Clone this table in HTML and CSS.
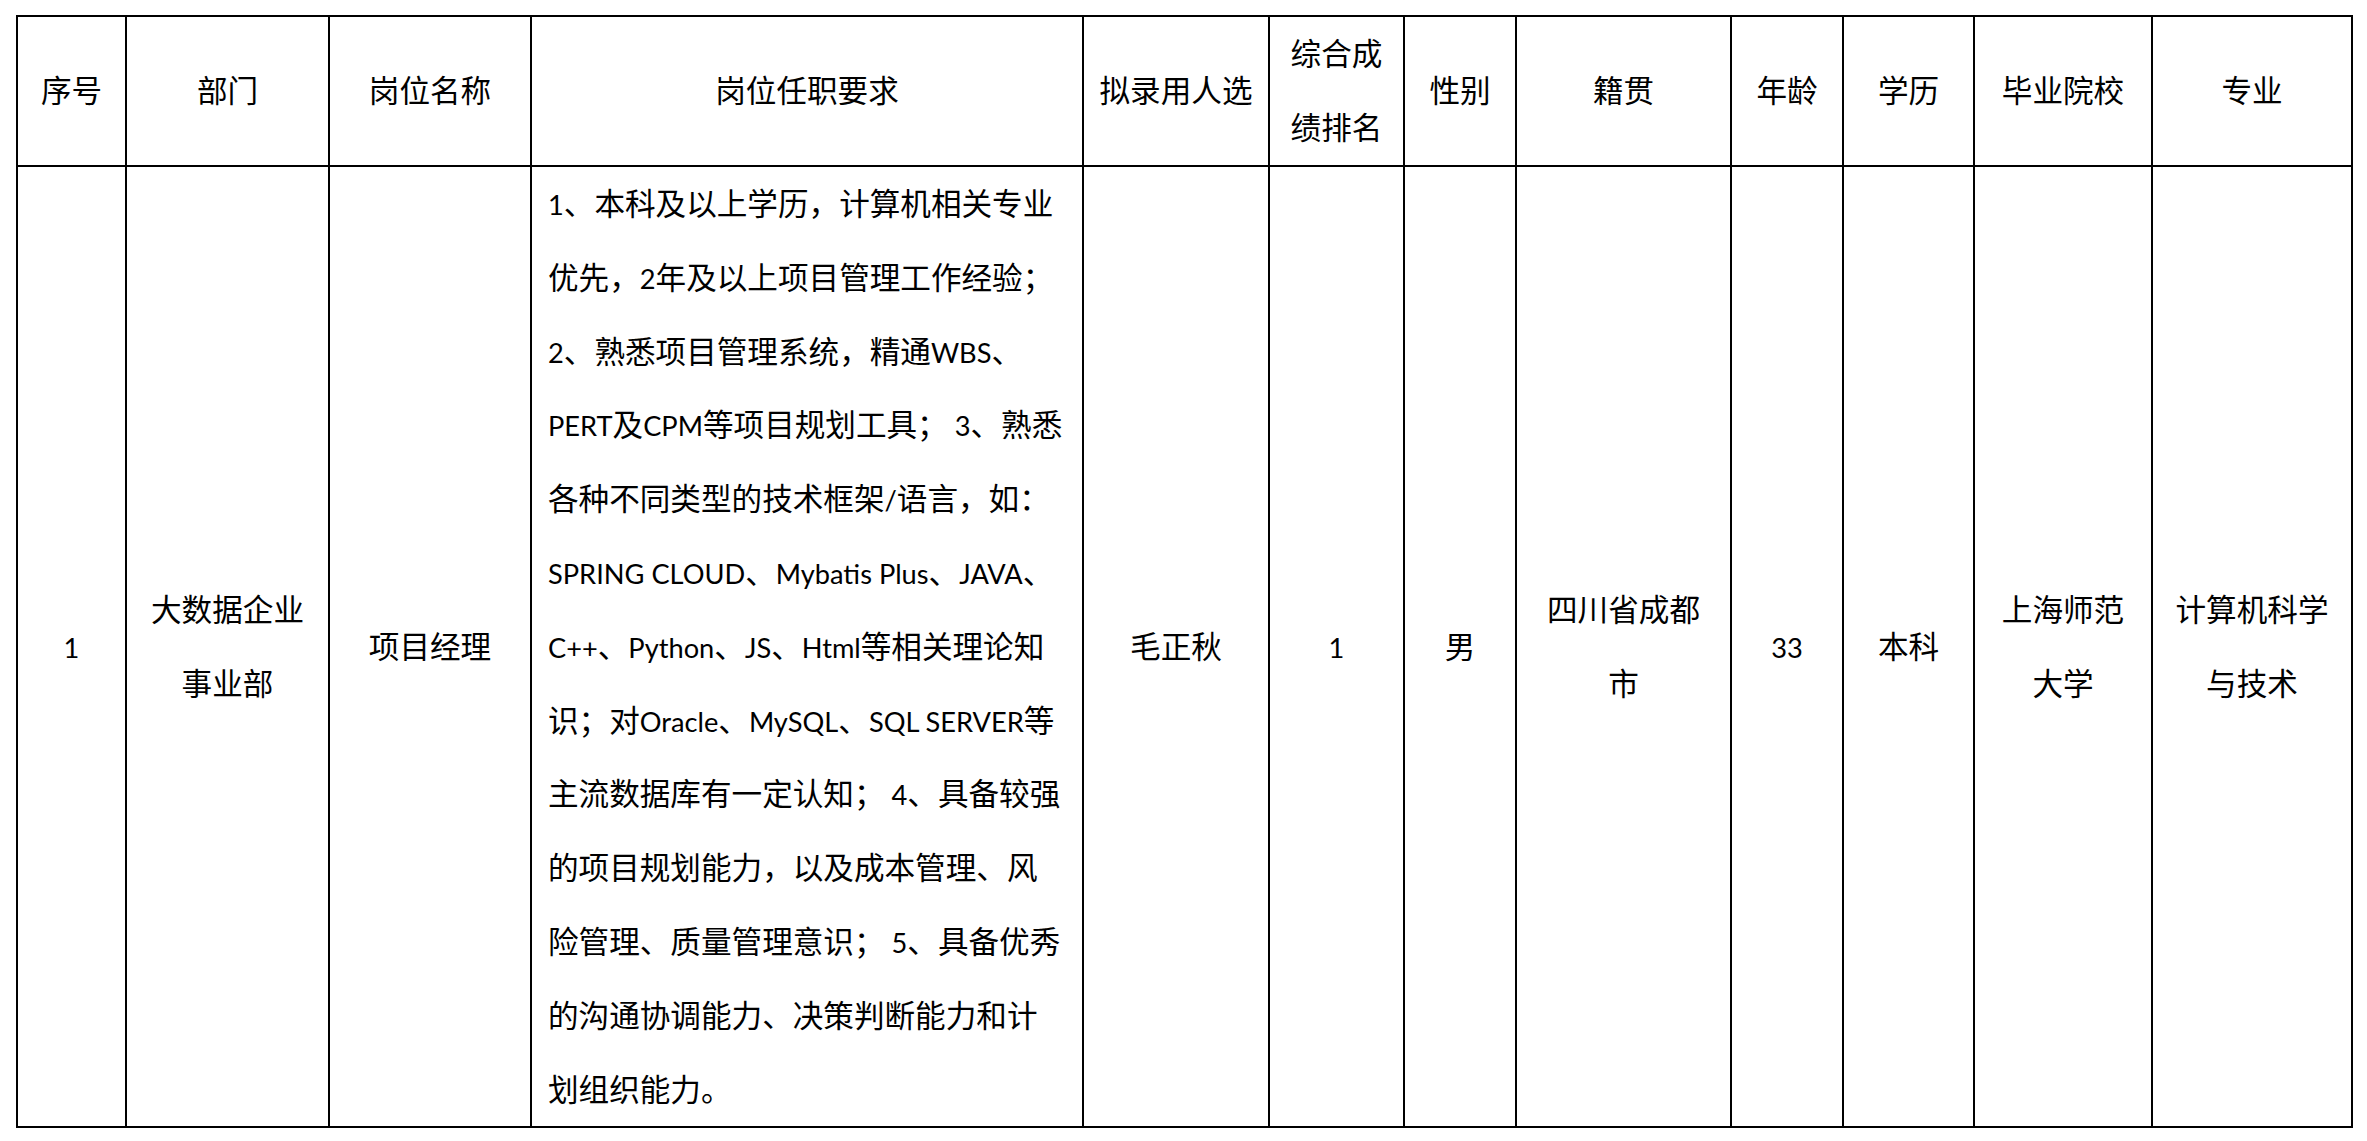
FILE: index.html
```html
<!DOCTYPE html>
<html lang="zh-CN">
<head>
<meta charset="utf-8">
<title>拟录用人员名单</title>
<link rel="stylesheet" href="styles.css">
</head>
<body>
<table class="roster">
  <colgroup>
    <col class="c-no">
    <col class="c-dept">
    <col class="c-post">
    <col class="c-req">
    <col class="c-name">
    <col class="c-rank">
    <col class="c-sex">
    <col class="c-origin">
    <col class="c-age">
    <col class="c-edu">
    <col class="c-school">
    <col class="c-major">
  </colgroup>
  <thead>
    <tr>
      <th>序号</th>
      <th>部门</th>
      <th>岗位名称</th>
      <th>岗位任职要求</th>
      <th>拟录用人选</th>
      <th>综合成<br>绩排名</th>
      <th>性别</th>
      <th>籍贯</th>
      <th>年龄</th>
      <th>学历</th>
      <th>毕业院校</th>
      <th>专业</th>
    </tr>
  </thead>
  <tbody>
    <tr>
      <td><span class="lat">1</span></td>
      <td>大数据企业<br>事业部</td>
      <td>项目经理</td>
      <td class="req"><span class="lat">1</span>、本科及以上学历，计算机相关专业<br>优先，<span class="lat">2</span>年及以上项目管理工作经验；<br><span class="lat">2</span>、熟悉项目管理系统，精通<span class="lat">WBS</span>、<br><span class="lat">PERT</span>及<span class="lat">CPM</span>等项目规划工具；<span class="lat"> 3</span>、熟悉<br>各种不同类型的技术框架<span class="lat">/</span>语言，如：<br><span class="lat">SPRING CLOUD</span>、<span class="lat">Mybatis Plus</span>、<span class="lat">JAVA</span>、<br><span class="lat">C++</span>、<span class="lat">Python</span>、<span class="lat">JS</span>、<span class="lat">Html</span>等相关理论知<br>识；对<span class="lat">Oracle</span>、<span class="lat">MySQL</span>、<span class="lat">SQL SERVER</span>等<br>主流数据库有一定认知；<span class="lat"> 4</span>、具备较强<br>的项目规划能力，以及成本管理、风<br>险管理、质量管理意识；<span class="lat"> 5</span>、具备优秀<br>的沟通协调能力、决策判断能力和计<br>划组织能力。</td>
      <td>毛正秋</td>
      <td><span class="lat">1</span></td>
      <td>男</td>
      <td>四川省成都<br>市</td>
      <td><span class="lat">33</span></td>
      <td>本科</td>
      <td>上海师范<br>大学</td>
      <td>计算机科学<br>与技术</td>
    </tr>
  </tbody>
</table>
</body>
</html>
```

FILE: styles.css
```css
html, body {
  margin: 0;
  padding: 0;
  background: #ffffff;
}

body {
  padding: 15px 0 0 16px;
  font-family: Lato, "Noto Sans CJK SC", sans-serif;
  color: #000000;
}

.roster {
  border-collapse: collapse;
  table-layout: fixed;
  width: 2337px;
  font-size: 30.6px;
  line-height: 73.8px;
}

.roster th,
.roster td {
  border: 2px solid #000000;
  padding: 0;
  text-align: center;
  vertical-align: middle;
  white-space: nowrap;
  font-weight: 400;
}

.roster th {
  height: 148px;
}

.roster td {
  height: 959px;
}

.roster td.req {
  text-align: left;
  vertical-align: top;
  padding-left: 16px;
}

.lat {
  font-size: 0.89em;
  line-height: 1;
}

.c-no { width: 109px; }
.c-dept { width: 203px; }
.c-post { width: 202px; }
.c-req { width: 552px; }
.c-name { width: 186px; }
.c-rank { width: 135px; }
.c-sex { width: 112px; }
.c-origin { width: 215px; }
.c-age { width: 112px; }
.c-edu { width: 131px; }
.c-school { width: 178px; }
.c-major { width: 200px; }
```
